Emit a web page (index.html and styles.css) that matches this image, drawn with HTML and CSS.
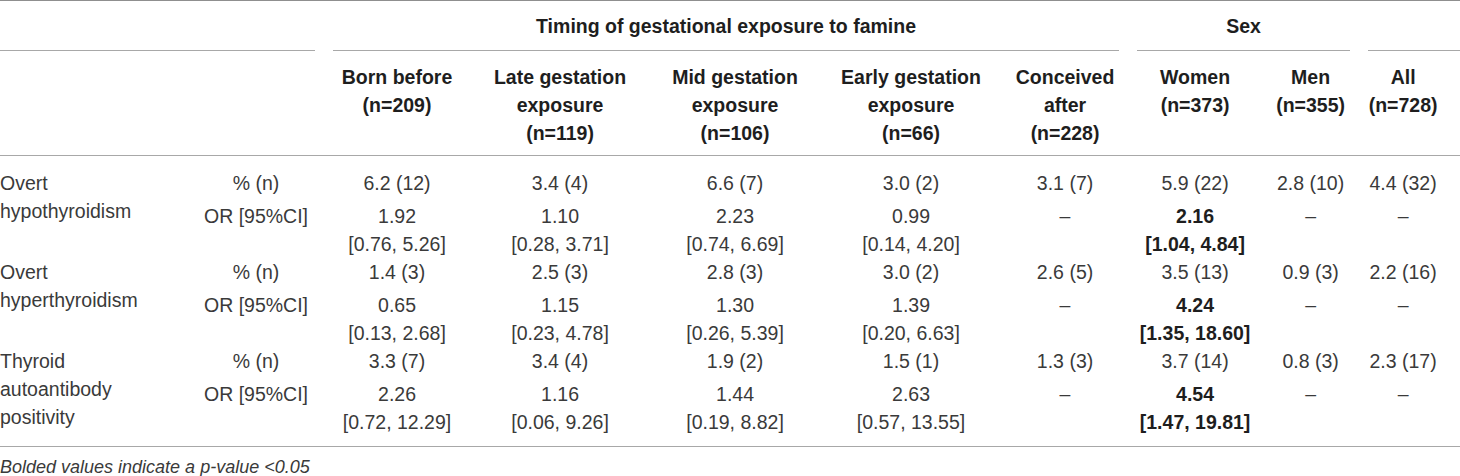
FILE: index.html
```html
<!DOCTYPE html>
<html lang="en">
<head>
    <meta charset="UTF-8">
    <meta name="viewport" content="width=device-width, initial-scale=1.0">
    <title>Thyroid outcomes by gestational famine exposure</title>
    <link rel="stylesheet" href="styles.css">
</head>
<body>
    <div class="table-wrap">
        <table class="data-table">
            <colgroup>
                <col class="col-label">
                <col class="col-stat">
                <col class="col-born">
                <col class="col-late">
                <col class="col-mid">
                <col class="col-early">
                <col class="col-after">
                <col class="col-women">
                <col class="col-men">
                <col class="col-all">
            </colgroup>
            <thead>
                <tr class="group-row">
                    <th colspan="2" class="first"><div class="rule">&nbsp;</div></th>
                    <th colspan="5"><div class="rule">Timing of gestational exposure to famine</div></th>
                    <th colspan="2"><div class="rule">Sex</div></th>
                    <th class="last"><div class="rule">&nbsp;</div></th>
                </tr>
                <tr class="head-row">
                    <th></th>
                    <th></th>
                    <th>Born before<br>(n=209)</th>
                    <th>Late gestation<br>exposure<br>(n=119)</th>
                    <th>Mid gestation<br>exposure<br>(n=106)</th>
                    <th>Early gestation<br>exposure<br>(n=66)</th>
                    <th>Conceived<br>after<br>(n=228)</th>
                    <th>Women<br>(n=373)</th>
                    <th>Men<br>(n=355)</th>
                    <th class="last">All<br>(n=728)</th>
                </tr>
            </thead>
            <tbody>
                <tr class="pct first-row">
                    <td rowspan="2" class="label">Overt hypothyroidism</td>
                    <td>% (n)</td>
                    <td>6.2 (12)</td>
                    <td>3.4 (4)</td>
                    <td>6.6 (7)</td>
                    <td>3.0 (2)</td>
                    <td>3.1 (7)</td>
                    <td>5.9 (22)</td>
                    <td>2.8 (10)</td>
                    <td class="last">4.4 (32)</td>
                </tr>
                <tr class="odds">
                    <td>OR [95%CI]</td>
                    <td>1.92<br>[0.76, 5.26]</td>
                    <td>1.10<br>[0.28, 3.71]</td>
                    <td>2.23<br>[0.74, 6.69]</td>
                    <td>0.99<br>[0.14, 4.20]</td>
                    <td>–</td>
                    <td class="sig">2.16<br>[1.04, 4.84]</td>
                    <td>–</td>
                    <td class="last">–</td>
                </tr>
                <tr class="pct">
                    <td rowspan="2" class="label">Overt hyperthyroidism</td>
                    <td>% (n)</td>
                    <td>1.4 (3)</td>
                    <td>2.5 (3)</td>
                    <td>2.8 (3)</td>
                    <td>3.0 (2)</td>
                    <td>2.6 (5)</td>
                    <td>3.5 (13)</td>
                    <td>0.9 (3)</td>
                    <td class="last">2.2 (16)</td>
                </tr>
                <tr class="odds">
                    <td>OR [95%CI]</td>
                    <td>0.65<br>[0.13, 2.68]</td>
                    <td>1.15<br>[0.23, 4.78]</td>
                    <td>1.30<br>[0.26, 5.39]</td>
                    <td>1.39<br>[0.20, 6.63]</td>
                    <td>–</td>
                    <td class="sig">4.24<br>[1.35, 18.60]</td>
                    <td>–</td>
                    <td class="last">–</td>
                </tr>
                <tr class="pct">
                    <td rowspan="2" class="label">Thyroid autoantibody positivity</td>
                    <td>% (n)</td>
                    <td>3.3 (7)</td>
                    <td>3.4 (4)</td>
                    <td>1.9 (2)</td>
                    <td>1.5 (1)</td>
                    <td>1.3 (3)</td>
                    <td>3.7 (14)</td>
                    <td>0.8 (3)</td>
                    <td class="last">2.3 (17)</td>
                </tr>
                <tr class="odds last-row">
                    <td>OR [95%CI]</td>
                    <td>2.26<br>[0.72, 12.29]</td>
                    <td>1.16<br>[0.06, 9.26]</td>
                    <td>1.44<br>[0.19, 8.82]</td>
                    <td>2.63<br>[0.57, 13.55]</td>
                    <td>–</td>
                    <td class="sig">4.54<br>[1.47, 19.81]</td>
                    <td>–</td>
                    <td class="last">–</td>
                </tr>
            </tbody>
        </table>
        <p class="footnote">Bolded values indicate a p-value &lt;0.05</p>
    </div>
</body>
</html>
```

FILE: styles.css
```css
:root {
    --text-regular: #3a3a3a;
    --text-bold: #1e1e1e;
    --rule-top: #8f8f8f;
    --rule: #a8a8a8;
}

* {
    margin: 0;
    padding: 0;
    box-sizing: border-box;
}

body {
    background: #ffffff;
    color: var(--text-regular);
    font-family: 'Liberation Sans', Arial, sans-serif;
    font-size: 19.5px;
    line-height: 28px;
    overflow: hidden;
}

.table-wrap {
    width: 1460px;
}

.data-table {
    width: 1460px;
    table-layout: fixed;
    border-collapse: separate;
    border-spacing: 0;
    border-top: 1px solid var(--rule-top);
    border-bottom: 1px solid var(--rule);
}

.col-label { width: 188px; }
.col-stat  { width: 136px; }
.col-born  { width: 146px; }
.col-late  { width: 180px; }
.col-mid   { width: 170px; }
.col-early { width: 182px; }
.col-after { width: 126px; }
.col-women { width: 134px; }
.col-men   { width: 97px; }
.col-all   { width: 101px; }

th,
td {
    padding: 0 9px;
    text-align: center;
    vertical-align: top;
    white-space: nowrap;
}

th {
    font-weight: bold;
    color: var(--text-bold);
}

/* spanning header with broken underlines */
.group-row th.first {
    padding-left: 0;
}

.group-row th.last {
    padding-right: 0;
}

.rule {
    padding: 11px 0 10px;
    border-bottom: 1px solid var(--rule);
}

.head-row th {
    padding-top: 12px;
    padding-bottom: 8px;
    border-bottom: 1px solid var(--rule);
}

.head-row th.last,
td.last {
    padding-right: 22px;
}

/* body rows */
td.label {
    text-align: left;
    white-space: normal;
    padding-left: 0;
    padding-right: 20px;
}

tr.pct td {
    padding-bottom: 5px;
}

tr.pct td.label {
    padding-bottom: 0;
}

tr.first-row td {
    padding-top: 13px;
}

tr.last-row td {
    padding-bottom: 10px;
}

td.sig {
    font-weight: bold;
    color: var(--text-bold);
}

.footnote {
    margin-top: 8px;
    font-size: 18px;
    line-height: 24px;
    font-style: italic;
}
```
